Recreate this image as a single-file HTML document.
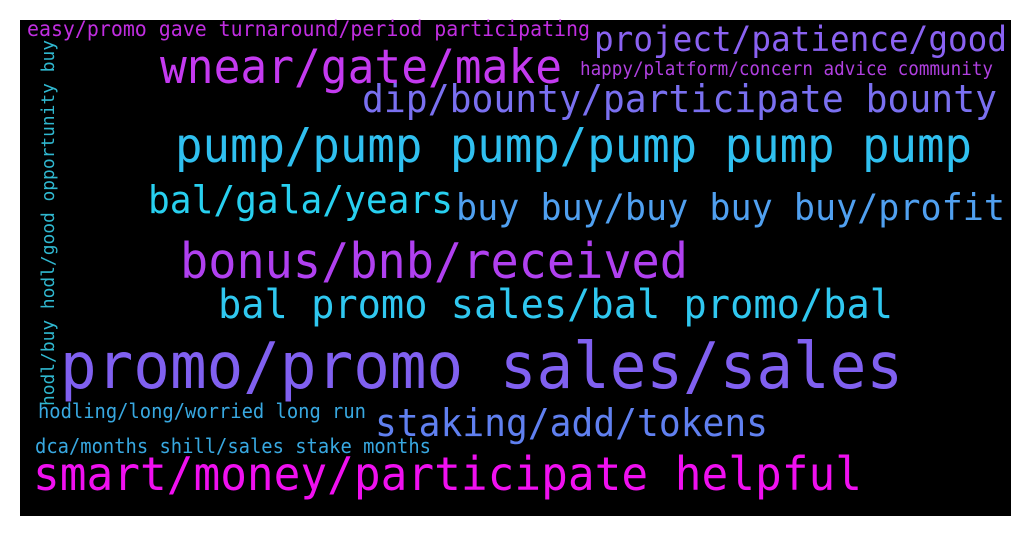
<!DOCTYPE html>
<html><head><meta charset="utf-8"><style>
html,body{margin:0;padding:0;background:#fff;width:1031px;height:536px;overflow:hidden}
svg{display:block}
text{font-family:"DejaVu Sans Mono","Liberation Mono",monospace}
</style></head><body>
<svg width="1031" height="536" xmlns="http://www.w3.org/2000/svg">
<rect x="20" y="20" width="991" height="496" fill="#000"/>
<g>
<text x="27" y="36" font-size="21" fill="#c02ee0" textLength="563" lengthAdjust="spacingAndGlyphs">easy/promo gave turnaround/period participating</text>
<text x="594" y="51" font-size="34.5" fill="#8a62f2" textLength="413" lengthAdjust="spacingAndGlyphs">project/patience/good</text>
<text x="160" y="83" font-size="47" fill="#c43af0" textLength="402" lengthAdjust="spacingAndGlyphs">wnear/gate/make</text>
<text x="580" y="75" font-size="18.3" fill="#b040e0" textLength="413" lengthAdjust="spacingAndGlyphs">happy/platform/concern advice community</text>
<text x="362" y="112" font-size="38" fill="#7a70f0" textLength="635" lengthAdjust="spacingAndGlyphs">dip/bounty/participate bounty</text>
<text x="175" y="162" font-size="48" fill="#30c0f0" textLength="797" lengthAdjust="spacingAndGlyphs">pump/pump pump/pump pump pump</text>
<text x="148" y="213" font-size="38" fill="#28d0f0" textLength="305" lengthAdjust="spacingAndGlyphs">bal/gala/years</text>
<text x="456" y="220" font-size="36.5" fill="#50a0f0" textLength="549" lengthAdjust="spacingAndGlyphs">buy buy/buy buy buy/profit</text>
<text x="180" y="278" font-size="49" fill="#b040f0" textLength="508" lengthAdjust="spacingAndGlyphs">bonus/bnb/received</text>
<text x="218" y="318" font-size="40.5" fill="#30c8f0" textLength="675" lengthAdjust="spacingAndGlyphs">bal promo sales/bal promo/bal</text>
<text x="60" y="388" font-size="64" fill="#8060f0" textLength="843" lengthAdjust="spacingAndGlyphs">promo/promo sales/sales</text>
<text x="375" y="436" font-size="38" fill="#6080f0" textLength="393" lengthAdjust="spacingAndGlyphs">staking/add/tokens</text>
<text x="38" y="418" font-size="20" fill="#38a8e0" textLength="328" lengthAdjust="spacingAndGlyphs">hodling/long/worried long run</text>
<text x="35" y="453" font-size="20" fill="#38a8e0" textLength="396" lengthAdjust="spacingAndGlyphs">dca/months shill/sales stake months</text>
<text x="33" y="490" font-size="46.5" fill="#f010f0" textLength="829" lengthAdjust="spacingAndGlyphs">smart/money/participate helpful</text>
<text transform="translate(54,406) rotate(-90)" x="0" y="0" font-size="18" fill="#30b8d0" textLength="366" lengthAdjust="spacingAndGlyphs">hodl/buy hodl/good opportunity buy</text>
</g>
</svg>
</body></html>
